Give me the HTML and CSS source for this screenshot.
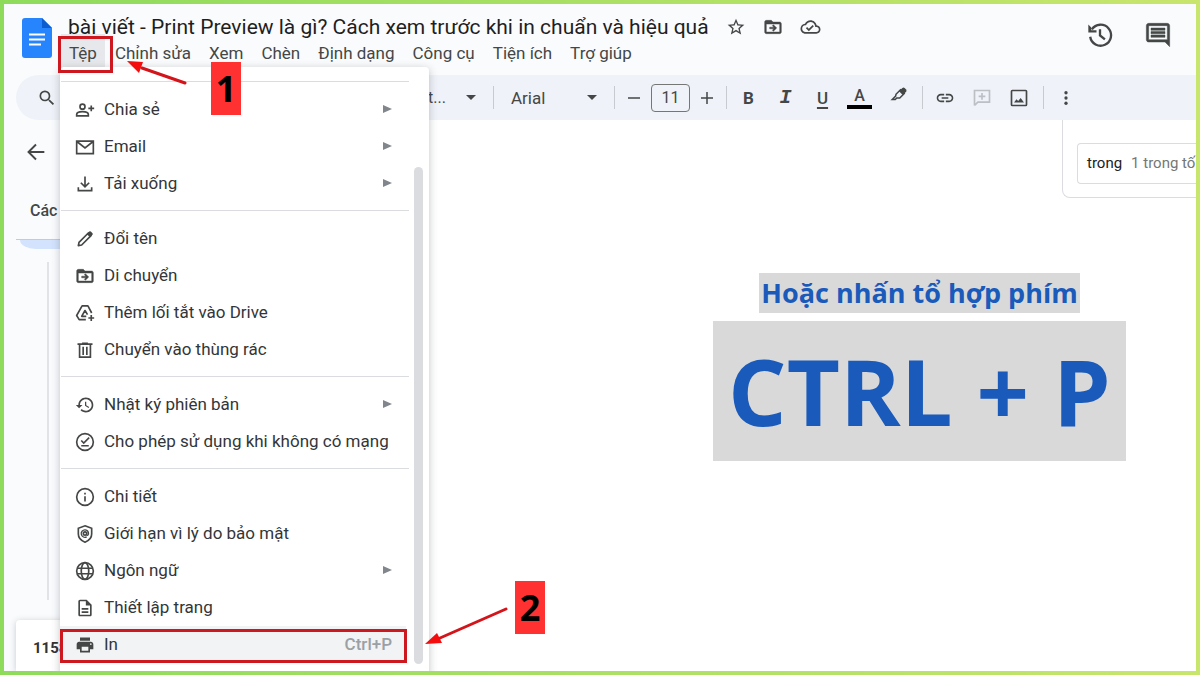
FILE: index.html
```html
<!DOCTYPE html>
<html lang="vi">
<head>
<meta charset="utf-8">
<title>bài viết - Print Preview là gì?</title>
<link rel="stylesheet" href="styles.css">
</head>
<body>
<svg class="sprite" aria-hidden="true">
  <symbol id="search" viewBox="0 0 24 24"><path d="M15.5 14h-.79l-.28-.27A6.471 6.471 0 0 0 16 9.5 6.5 6.5 0 1 0 9.5 16c1.61 0 3.09-.59 4.23-1.57l.27.28v.79l5 4.99L20.49 19l-4.99-5zm-6 0C7.01 14 5 11.99 5 9.5S7.01 5 9.5 5 14 7.01 14 9.5 11.99 14 9.5 14z"/></symbol>
  <symbol id="star" viewBox="0 0 24 24"><path d="M22 9.24l-7.19-.62L12 2 9.19 8.63 2 9.24l5.46 4.73L5.82 21 12 17.27 18.18 21l-1.63-7.03L22 9.24zM12 15.4l-3.76 2.27 1-4.28-3.32-2.88 4.38-.38L12 6.1l1.71 4.04 4.38.38-3.32 2.88 1 4.28L12 15.4z"/></symbol>
  <symbol id="folder" viewBox="0 0 24 24"><path d="M20 6h-8l-2-2H4c-1.100 0-2 .9-2 2v12c0 1.100.9 2 2 2h16c1.100 0 2-.9 2-2V8c0-1.100-.9-2-2-2zm0 12H4V8.500h16V18zm-7.500-.8 4-4-4-4-1.300 1.300 1.700 1.700H8v2h4.900l-1.700 1.700z" stroke="currentColor" stroke-width=".5"/></symbol>
  <symbol id="cloud" viewBox="0 0 24 24"><path d="M19.35 10.04C18.67 6.590 15.640 4 12 4 9.110 4 6.600 5.640 5.350 8.040 2.340 8.360 0 10.910 0 14c0 3.310 2.690 6 6 6h13c2.760 0 5-2.240 5-5 0-2.640-2.050-4.780-4.650-4.960zM19 18H6c-2.210 0-4-1.790-4-4 0-2.050 1.530-3.760 3.560-3.970l1.070-.11.5-.95C8.080 7.140 9.940 6 12 6c2.620 0 4.880 1.860 5.390 4.430l.3 1.500 1.530.11c1.560.1 2.780 1.410 2.780 2.960 0 1.650-1.350 3-3 3zm-9-3.820l-2.090-2.090L6.500 13.500 10 17l6.010-6.010-1.410-1.410z"/></symbol>
  <symbol id="comments" viewBox="0 0 24 24"><path d="M22 4c0-1.100-.9-2-2-2H4c-1.100 0-2 .9-2 2v12c0 1.100.9 2 2 2h14l4 4zM20 4v12H4V4zM6 12h12v2H6zm0-3h12v2H6zm0-3h12v2H6z" stroke="currentColor" stroke-width=".4"/></symbol>
  <symbol id="recent" viewBox="0 0 24 24"><g fill="none" stroke="currentColor" stroke-width="2"><path d="M3.600 13.500A9 9 0 1 0 5 7.200M12 7v5.300l4.200 3.500"/></g><path d="M2 3l2.500 2.500V8H9v1.800H2z"/></symbol>
  <symbol id="history" viewBox="0 0 24 24"><path d="M13 3c-4.970 0-9 4.030-9 9H1l3.890 3.890.07.14L9 12H6c0-3.870 3.130-7 7-7s7 3.130 7 7-3.130 7-7 7c-1.930 0-3.680-.79-4.940-2.060l-1.420 1.420C8.270 19.990 10.510 21 13 21c4.970 0 9-4.030 9-9s-4.030-9-9-9zm-1 5v5l4.280 2.540.72-1.210-3.500-2.080V8H12z"/></symbol>
  <symbol id="person" viewBox="0 0 24 24"><g fill="none" stroke="currentColor" stroke-width="2"><circle cx="9" cy="8" r="3"/><path d="M2 19v-1.500C2 15 6 14 9 14s7 1 7 3.500V19zM19.500 6.500v7M16 10h7"/></g></symbol>
  <symbol id="mail" viewBox="0 0 24 24"><path d="M2 5h20v15H2zM3 6l9 7 9-7" fill="none" stroke="currentColor" stroke-width="2"/></symbol>
  <symbol id="download" viewBox="0 0 24 24"><path d="M12 3v12M7 10.500l5 5 5-5M4 16v4h16v-4" fill="none" stroke="currentColor" stroke-width="2"/></symbol>
  <symbol id="pencil" viewBox="0 0 24 24"><path d="M4 20l.8-4L16 4.800l3.200 3.200L8 19.200z" fill="none" stroke="currentColor" stroke-width="2" stroke-linejoin="round"/><path d="M14 6l3-3q1-.8 2 0l2 2q.8 1 0 2l-3 3z"/></symbol>
  <symbol id="drive" viewBox="0 0 24 24"><g fill="none" stroke="currentColor" stroke-width="2" stroke-linejoin="round"><path d="M13 20H5l-3-5L8.500 3.500h7L20 12"/><path d="M13.500 16H8l4-7 3 5M19.500 14.500v7M16 18h7"/></g></symbol>
  <symbol id="trash" viewBox="0 0 24 24"><path d="M3 5h18M8.500 4h7M5.500 5v15.500h13V5M9.800 8v10M14.200 8v10" fill="none" stroke="currentColor" stroke-width="2"/></symbol>
  <symbol id="offline" viewBox="0 0 24 24"><g fill="none" stroke="currentColor" stroke-width="2"><circle cx="12" cy="12" r="10"/><path d="M7.500 10.200l3 3L17 6.800M7.500 16.500h9"/></g></symbol>
  <symbol id="info" viewBox="0 0 24 24"><circle cx="12" cy="12" r="10" fill="none" stroke="currentColor" stroke-width="2"/><path d="M11 11h2v6.500h-2zM11 7h2v2h-2z"/></symbol>
  <symbol id="shield" viewBox="0 0 24 24"><g fill="none" stroke="currentColor" stroke-width="2"><path d="M12 2.200l8 3V12c0 4.500-3.200 8-8 9.800C7.200 20 4 16.500 4 12V5.200z"/><circle cx="12" cy="11.500" r="2"/><path d="M14 9.500V12q0 2 1.500 1.500c1.500-1 1-6.500-3.500-6.500a4.500 4.500 0 1 0 2 8.500" stroke-width="1.500"/></g></symbol>
  <symbol id="globe" viewBox="0 0 24 24"><g fill="none" stroke="currentColor" stroke-width="2"><circle cx="12" cy="12" r="10"/><ellipse cx="12" cy="12" rx="4.500" ry="10"/><path d="M2.500 8.700h19M2.500 15.300h19"/></g></symbol>
  <symbol id="page" viewBox="0 0 24 24"><path d="M8 16h8v2H8zm0-4h8v2H8zm6-10H6c-1.100 0-2 .9-2 2v16c0 1.100.89 2 1.990 2H18c1.100 0 2-.9 2-2V8l-6-6zm4 18H6V4h7v5h5v11z"/></symbol>
  <symbol id="print" viewBox="0 0 24 24"><path d="M19 8H5c-1.660 0-3 1.340-3 3v6h4v4h12v-4h4v-6c0-1.660-1.340-3-3-3zm-3 11H8v-5h8v5zm3-7c-.55 0-1-.45-1-1s.45-1 1-1 1 .45 1 1-.45 1-1 1zm-1-9H6v4h12V3z"/></symbol>
  <symbol id="link" viewBox="0 0 24 24"><path d="M3.900 12c0-1.710 1.390-3.100 3.100-3.100h4V7H7c-2.760 0-5 2.240-5 5s2.240 5 5 5h4v-1.900H7c-1.710 0-3.100-1.390-3.100-3.100zM8 13h8v-2H8v2zm9-6h-4v1.900h4c1.710 0 3.100 1.390 3.100 3.100s-1.390 3.100-3.100 3.100h-4V17h4c2.760 0 5-2.240 5-5s-2.240-5-5-5z"/></symbol>
  <symbol id="addcomment" viewBox="0 0 24 24"><path d="M3 21V3h18v14H7l-4 4M12 6v8M8 10h8" fill="none" stroke="currentColor" stroke-width="2"/></symbol>
  <symbol id="image" viewBox="0 0 24 24"><rect x="3" y="3" width="18" height="18" rx="1" fill="none" stroke="currentColor" stroke-width="2"/><path d="M6 17.500l3-4 2 2 3-3.500 4 5.500z"/></symbol>
  <symbol id="more" viewBox="0 0 24 24"><circle cx="12" cy="5" r="2.200"/><circle cx="12" cy="12" r="2.200"/><circle cx="12" cy="19" r="2.200"/></symbol>
  <symbol id="marker" viewBox="0 0 24 24"><path d="M8 11l6-6 5 5-6 6H9l-2 2H3l4.500-4.500z" fill="none" stroke="currentColor" stroke-width="2"/><path d="M12 7l4.500-4.500q1.500-1 3 0l2 2q1 1.500 0 3L17 12z"/></symbol>
  <symbol id="minus" viewBox="0 0 24 24"><path d="M4 11h16v2H4z"/></symbol>
  <symbol id="plus" viewBox="0 0 24 24"><path d="M4 11h7V4h2v7h7v2h-7v7h-2v-7H4z"/></symbol>
  <symbol id="back" viewBox="0 0 24 24"><path d="M22 12H3.500M12 3l-9 9 9 9" fill="none" stroke="currentColor" stroke-width="2.300"/></symbol>
</svg>
<div class="app">
  <header class="header">
    <a class="logo" href="#" aria-label="Tài liệu">
      <svg viewBox="0 0 30 40" width="30" height="40"><path d="M3 0h17l10 10v27q0 3-3 3H3q-3 0-3-3V3q0-3 3-3z" fill="#2684fc"/><path d="M20 0l10 10H20z" fill="#0b5dd0"/><path d="M7 16.500h16M7 21.500h16M7 26.500h12" stroke="#fff" stroke-width="2"/></svg>
    </a>
    <div class="heading">
      <div class="title-row">
        <h1 class="title">bài viết - Print Preview là gì? Cách xem trước khi in chuẩn và hiệu quả</h1>
        <button class="icon-btn" aria-label="Gắn dấu sao"><svg class="icon"><use href="#star"/></svg></button>
        <button class="icon-btn" aria-label="Di chuyển"><svg class="icon"><use href="#folder"/></svg></button>
        <button class="icon-btn" aria-label="Trạng thái"><svg class="icon cloud"><use href="#cloud"/></svg></button>
      </div>
      <nav class="menubar">
        <div class="file">
          <button class="menu-name active">Tệp</button>
          <div class="menu">
            <hr class="rule">
            <button class="item"><svg class="icon"><use href="#person"/></svg>Chia sẻ<span class="arrow"></span></button>
            <button class="item"><svg class="icon"><use href="#mail"/></svg>Email<span class="arrow"></span></button>
            <button class="item"><svg class="icon"><use href="#download"/></svg>Tải xuống<span class="arrow"></span></button>
            <hr class="rule">
            <button class="item"><svg class="icon"><use href="#pencil"/></svg>Đổi tên</button>
            <button class="item"><svg class="icon"><use href="#folder"/></svg>Di chuyển</button>
            <button class="item"><svg class="icon"><use href="#drive"/></svg>Thêm lối tắt vào Drive</button>
            <button class="item"><svg class="icon"><use href="#trash"/></svg>Chuyển vào thùng rác</button>
            <hr class="rule">
            <button class="item"><svg class="icon"><use href="#history"/></svg>Nhật ký phiên bản<span class="arrow"></span></button>
            <button class="item"><svg class="icon"><use href="#offline"/></svg>Cho phép sử dụng khi không có mạng</button>
            <hr class="rule">
            <button class="item"><svg class="icon"><use href="#info"/></svg>Chi tiết</button>
            <button class="item"><svg class="icon"><use href="#shield"/></svg>Giới hạn vì lý do bảo mật</button>
            <button class="item"><svg class="icon"><use href="#globe"/></svg>Ngôn ngữ<span class="arrow"></span></button>
            <button class="item"><svg class="icon"><use href="#page"/></svg>Thiết lập trang</button>
            <button class="item current"><svg class="icon"><use href="#print"/></svg>In<kbd class="key">Ctrl+P</kbd></button>
            <span class="scrollbar"></span>
          </div>
        </div>
        <button class="menu-name">Chỉnh sửa</button>
        <button class="menu-name">Xem</button>
        <button class="menu-name">Chèn</button>
        <button class="menu-name">Định dạng</button>
        <button class="menu-name">Công cụ</button>
        <button class="menu-name">Tiện ích</button>
        <button class="menu-name">Trợ giúp</button>
      </nav>
    </div>
    <div class="header-tools">
      <button class="icon-btn" aria-label="Lịch sử"><svg class="icon large"><use href="#recent"/></svg></button>
      <button class="icon-btn" aria-label="Nhận xét"><svg class="icon large"><use href="#comments"/></svg></button>
    </div>
  </header>

  <div class="toolbar">
    <button class="tool search" aria-label="Tìm kiếm"><svg class="icon"><use href="#search"/></svg></button>
    <button class="picker style-picker">t...<span class="caret"></span></button>
    <span class="divider"></span>
    <button class="picker font-picker">Arial<span class="caret"></span></button>
    <span class="divider"></span>
    <div class="size">
      <button class="tool narrow" aria-label="Giảm"><svg class="icon small"><use href="#minus"/></svg></button>
      <input class="size-input" aria-label="Cỡ chữ" value="11">
      <button class="tool narrow" aria-label="Tăng"><svg class="icon small"><use href="#plus"/></svg></button>
    </div>
    <span class="divider"></span>
    <div class="group text-tools">
      <button class="tool bold">B</button>
      <button class="tool italic">I</button>
      <button class="tool underline">U</button>
      <button class="tool"><span class="color">A</span></button>
      <button class="tool marker" aria-label="Đánh dấu"><svg class="icon small"><use href="#marker"/></svg></button>
    </div>
    <span class="divider"></span>
    <div class="group insert-tools">
      <button class="tool" aria-label="Liên kết"><svg class="icon"><use href="#link"/></svg></button>
      <button class="tool" aria-label="Thêm nhận xét" disabled><svg class="icon"><use href="#addcomment"/></svg></button>
      <button class="tool" aria-label="Hình ảnh"><svg class="icon"><use href="#image"/></svg></button>
    </div>
    <span class="divider"></span>
    <button class="tool" aria-label="Khác"><svg class="icon small"><use href="#more"/></svg></button>
  </div>

  <main class="main">
    <aside class="outline">
      <button class="icon-btn back" aria-label="Quay lại"><svg class="icon"><use href="#back"/></svg></button>
      <h2 class="outline-title">Các</h2>
      <div class="tab-list"><div class="tab"></div></div>
      <div class="track"></div>
      <div class="count">1158</div>
    </aside>
    <section class="canvas">
      <p class="hint">Hoặc nhấn tổ hợp phím</p>
      <p class="shortcut">CTRL + P</p>
    </section>
    <div class="finder"><div class="finder-box"><span class="term">trong</span><span class="total">1 trong tố</span></div></div>
  </main>

  <div class="mark file-mark"></div>
  <div class="mark print-mark"></div>
  <svg class="arrows" viewBox="0 0 600 671" width="600" height="671" aria-hidden="true">
    <g stroke="#d3151b" stroke-width="3" stroke-linecap="round"><path d="M181 79L138 64M502 605L436 634"/></g>
    <g fill="#f40d0d"><path d="M123 57L139 58L135 69z"/><path d="M421 640L433 629L438 639z"/></g>
  </svg>
  <span class="step step-one">1</span>
  <span class="step step-two">2</span>
</div>
</body>
</html>
```

FILE: styles.css
```css
* { box-sizing: border-box; }
body {
  margin: 0;
  min-height: 100vh;
  padding: 4px;
  display: flex;
  background: linear-gradient(90deg, #8edb5c, #c8e56c);
  font-family: Roboto, "Noto Sans", sans-serif;
  font-size: 16px;
  color: #444746;
}
button, input, kbd { font: inherit; color: inherit; }
button { border: 0; padding: 0; background: none; }
.sprite { position: absolute; width: 0; height: 0; }
.icon { display: block; width: 20px; height: 20px; flex: none; fill: currentColor; }
.icon.small { width: 18px; height: 18px; }
.icon.cloud { width: 21px; }
.icon.large { width: 28px; height: 28px; }
.icon-btn { display: flex; align-items: center; justify-content: center; }
.app {
  position: relative;
  flex: 1;
  min-width: 0;
  display: flex;
  flex-direction: column;
  overflow: hidden;
  background: #f9fbfd;
}

.header { display: flex; align-items: flex-start; height: 71px; padding: 8px 24px 0 18px; }
.logo { display: block; margin: 6px 16px 0 0; line-height: 0; }
.heading { flex: 1; }
.title-row { display: flex; align-items: center; height: 30px; gap: 17px; }
.title { margin: 0; font: 400 21px/30px Roboto, sans-serif; color: #1f1f1f; white-space: nowrap; }
.menubar { display: flex; gap: 18px; height: 22px; font-size: 17px; }
.menu-name { line-height: 22px; white-space: nowrap; }
.header-tools { display: flex; gap: 30px; padding-top: 9px; }

.file { position: relative; margin-left: 1px; }
.menu-name.active { background: #e6e8eb; box-shadow: 0 0 0 8px #e6e8eb; }
.menu {
  position: absolute;
  z-index: 2;
  top: 25px;
  left: -9px;
  width: 369px;
  height: 612px;
  padding-top: 6px;
  border-radius: 4px;
  background: #fff;
  box-shadow: 0 2px 8px rgba(60, 64, 67, .3);
}
.rule { height: 1px; margin: 8px 20px 9px 1px; border: 0; background: #dadce0; }
.item {
  display: flex;
  align-items: center;
  gap: 9px;
  width: 346px;
  height: 37px;
  padding: 0 14px 2px 15px;
  color: #333638;
  text-align: left;
  white-space: nowrap;
}
.item .icon { color: #444746; margin-top: 2px; }
.item.current { background: #f1f3f4; }
.arrow { margin-left: auto; border: 4px solid transparent; border-left: 9px solid #80868b; border-right: 0; }
.key { margin-left: auto; font-weight: 500; color: #9aa0a6; }
.scrollbar { position: absolute; top: 100px; right: 6px; width: 9px; height: 497px; border-radius: 5px; background: #dadce0; }

.toolbar {
  display: flex;
  align-items: center;
  height: 45px;
  margin-left: 12px;
  padding-left: 14px;
  border-radius: 23px 0 0 23px;
  background: #eff2f8;
}
.tool { display: flex; align-items: center; justify-content: center; width: 25px; height: 28px; }
.tool.search { width: 34px; }
.tool.narrow { width: 20px; }
.tool:disabled { color: #bcbfc3; }
.picker { display: flex; align-items: center; justify-content: space-between; height: 28px; }
.style-picker { width: 60px; margin-left: 360px; padding: 0 8px 0 4px; }
.font-picker { width: 102px; padding: 0 8px; font-size: 17px; }
.caret { border: 5px solid transparent; border-top-color: #444746; border-bottom: 0; }
.divider { width: 1px; height: 23px; margin: 0 9px; background: #c7cacf; }
.size { display: flex; align-items: center; gap: 7px; }
.size-input { width: 39px; height: 28px; padding: 0; border: 1px solid #747775; border-radius: 4px; background: none; text-align: center; }
.group { display: flex; align-items: center; gap: 12px; }
.text-tools { padding-right: 4px; }
.insert-tools { padding-right: 3px; }
.bold { font-size: 17px; font-weight: 700; }
.italic { font: italic 700 20px "Liberation Mono", monospace; }
.underline { font-size: 17px; font-weight: 500; text-decoration: underline 2px; text-underline-offset: 3px; }
.color { width: 25px; border-bottom: 4px solid #000; font-size: 16px; font-weight: 500; line-height: 18px; }
.marker { padding: 0 0 5px 5px; }

.main { position: relative; flex: 1; display: flex; background: #fff; }
.outline { width: 240px; display: flex; flex-direction: column; padding: 22px 0 0 12px; background: #f9fbfd; }
.back { width: 20px; height: 20px; margin-left: 10px; }
.outline-title { margin: 38px 0 0 14px; font-size: 16px; font-weight: 500; line-height: 22px; }
.tab-list { margin-top: 17px; border-top: 1px solid #c7cacf; }
.tab { height: 9px; margin-left: 4px; background: #d3e3fd; border-radius: 0 0 0 16px / 0 0 0 9px; }
.track { flex: 1; width: 2px; margin: 13px 0 20px 31px; background: #e1e3e6; }
.count { height: 51px; padding-left: 17px; border-radius: 4px 0 0 0; background: #fff; box-shadow: 0 1px 6px rgba(60, 64, 67, .25); font-size: 15px; font-weight: 700; line-height: 57px; color: #303336; }
.canvas { flex: 1; display: flex; flex-direction: column; align-items: center; gap: 8px; padding: 153px 0 0 399px; }
.hint, .shortcut { margin: 0; background: #d9d9d9; color: #1a5aba; font-family: "Open Sans", sans-serif; font-weight: 700; white-space: nowrap; }
.hint { padding: 0 2px; font-size: 27px; line-height: 40px; }
.shortcut { padding: 0 15px; font-size: 92px; line-height: 140px; }
.finder {
  position: absolute;
  top: 0;
  right: 0;
  width: 134px;
  padding: 23px 0 13px 14px;
  border: solid #dadce0;
  border-width: 0 0 1px 1px;
  border-radius: 0 0 0 8px;
}
.finder-box { display: flex; gap: 9px; padding: 0 0 0 9px; border: solid #dadce0; border-width: 1px 0 1px 1px; border-radius: 4px 0 0 4px; font-size: 15px; line-height: 39px; white-space: nowrap; }
.term { color: #202124; }
.total { color: #747775; }

.mark { position: absolute; z-index: 3; border: 3px solid #cc181e; }
.file-mark { left: 54px; top: 32px; width: 55px; height: 37px; }
.print-mark { left: 56px; top: 625px; width: 347px; height: 34px; }
.arrows { position: absolute; z-index: 3; left: 0; top: 0; }
.step { position: absolute; z-index: 3; width: 30px; background: #ff3131; color: #000; font: 700 36px/53px "Open Sans", sans-serif; text-align: center; }
.step-one { left: 207px; top: 58px; }
.step-two { left: 511px; top: 577px; }
```
